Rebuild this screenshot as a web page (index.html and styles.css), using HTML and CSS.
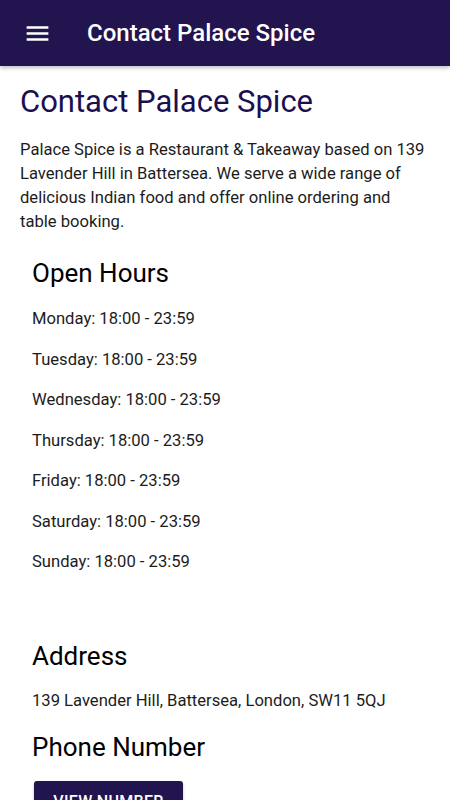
FILE: index.html
```html
<!DOCTYPE html>
<html lang="en">
<head>
    <meta charset="UTF-8">
    <meta name="viewport" content="width=device-width, initial-scale=1.0">
    <title>Contact Palace Spice</title>
    <link rel="stylesheet" href="styles.css">
</head>
<body>
    <header class="toolbar">
        <button class="menu-button" aria-label="Menu">
            <svg viewBox="0 0 24 24" width="29" height="29"><path fill="currentColor" d="M3 18h18v-2H3v2zm0-5h18v-2H3v2zm0-7v2h18V6H3z"/></svg>
        </button>
        <div class="toolbar-title">Contact Palace Spice</div>
    </header>

    <main class="content">
        <h1>Contact Palace Spice</h1>
        <p class="intro">Palace Spice is a Restaurant &amp; Takeaway based on 139 Lavender Hill in Battersea. We serve a wide range of delicious Indian food and offer online ordering and table booking.</p>

        <section class="info">
            <h2>Open Hours</h2>
            <div class="hours">
                <p>Monday: 18:00 - 23:59</p>
                <p>Tuesday: 18:00 - 23:59</p>
                <p>Wednesday: 18:00 - 23:59</p>
                <p>Thursday: 18:00 - 23:59</p>
                <p>Friday: 18:00 - 23:59</p>
                <p>Saturday: 18:00 - 23:59</p>
                <p>Sunday: 18:00 - 23:59</p>
            </div>

            <h2 class="address-title">Address</h2>
            <p class="address">139 Lavender Hill, Battersea, London, SW11 5QJ</p>

            <h2>Phone Number</h2>
            <button class="view-number">View Number</button>
        </section>
    </main>
</body>
</html>
```

FILE: styles.css
```css
body {
    margin: 0;
    font-family: Roboto, "Noto Sans", sans-serif;
    background-color: #fff;
    color: #1c1c1c;
    overflow: hidden;
}
.toolbar {
    height: 66px;
    background-color: #22144e;
    color: #fff;
    display: flex;
    align-items: center;
    box-shadow: 0 2px 4px rgba(0,0,0,0.25);
    position: relative;
}
.menu-button {
    background: none;
    border: none;
    color: #fff;
    padding: 0;
    margin-left: 23px;
    width: 29px;
    height: 29px;
    display: flex;
}
.toolbar-title {
    margin-left: 35px;
    font-size: 24px;
    font-weight: 500;
}
.content {
    padding: 0 20px;
}
h1 {
    font-size: 31px;
    font-weight: 400;
    line-height: 36px;
    color: #1a1050;
    margin: 18px 0 18px;
}
.intro {
    font-size: 16.6px;
    line-height: 24px;
    margin: 0;
}
.info {
    padding: 0 12px;
}
h2 {
    font-size: 26px;
    font-weight: 400;
    line-height: 32px;
    color: #000;
    margin: 0;
}
.info h2:first-child {
    margin-top: 23px;
}
.hours {
    margin-top: 18px;
}
.hours p, .address {
    font-size: 16.6px;
    line-height: 24.5px;
    margin: 0 0 16px;
}
.address-title {
    margin-top: 65px;
}
.address {
    margin: 17px 0 18px;
}
.view-number {
    margin: 18px 0 0 2px;
    width: 149px;
    height: 40px;
    background-color: #22144e;
    color: #fff;
    border: none;
    border-radius: 3px;
    font-family: Roboto, sans-serif;
    font-size: 16px;
    font-weight: 500;
    text-transform: uppercase;
    letter-spacing: 0.3px;
    box-shadow: 0 2px 3px rgba(0,0,0,0.25);
}
```
